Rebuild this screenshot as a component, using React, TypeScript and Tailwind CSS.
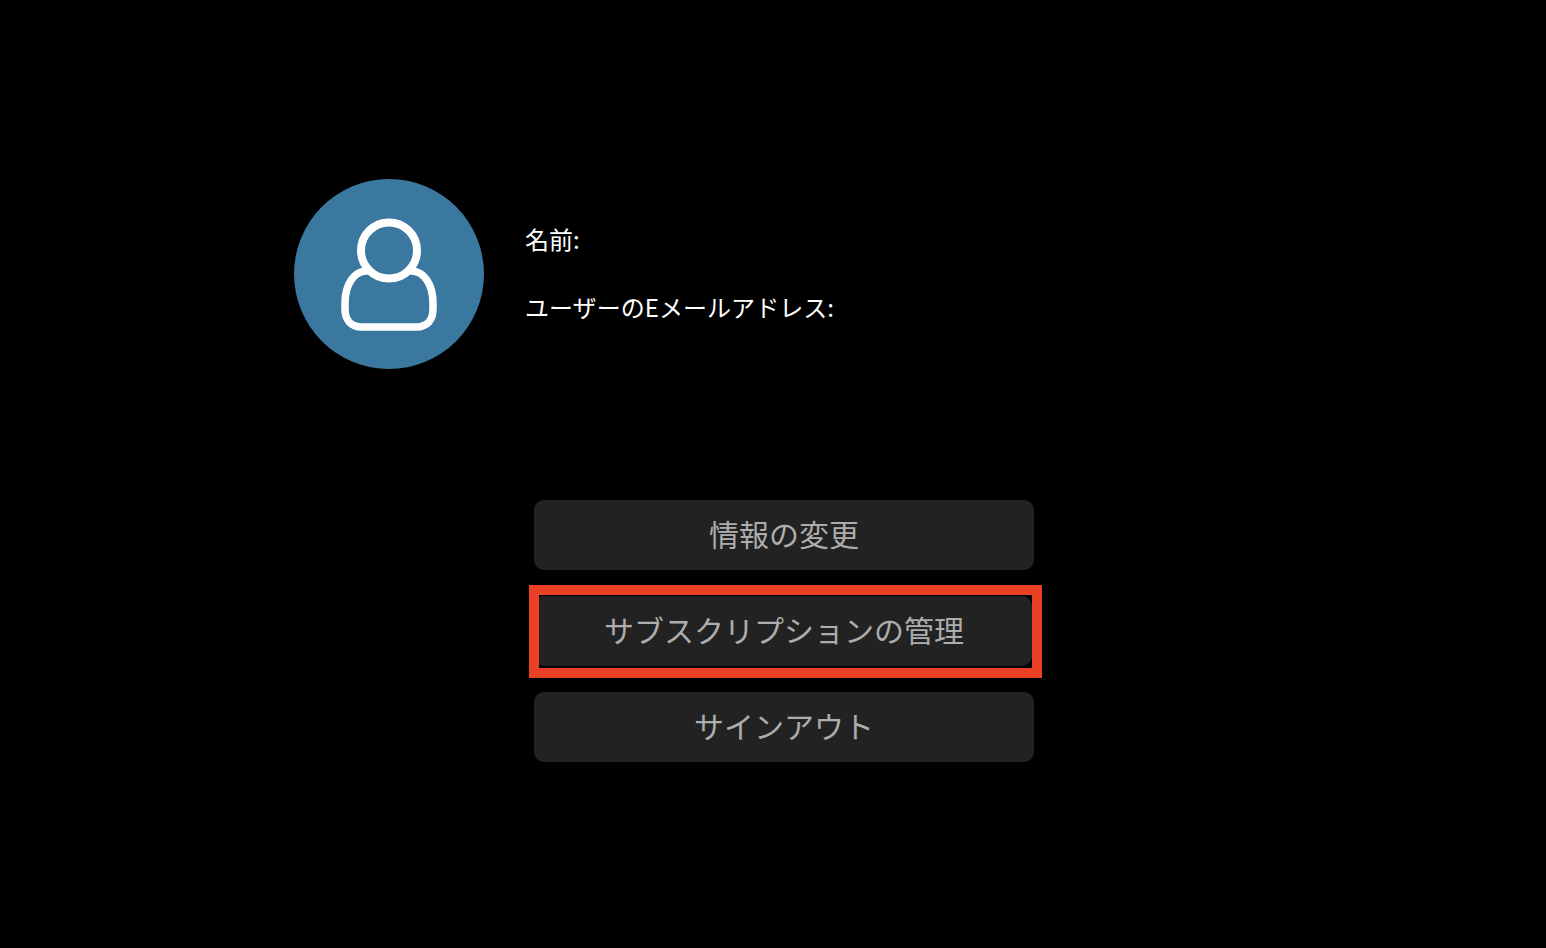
import React from "react";

const font = { fontFamily: '"Noto Sans CJK JP", "Noto Sans", sans-serif' };

const Avatar = () => (
  <div className="w-[190px] h-[190px] rounded-full bg-[#3a789f] shrink-0">
    <svg viewBox="0 0 190 190" className="w-full h-full" fill="none" stroke="#fff" strokeWidth="7.5">
      <circle cx="95" cy="71.5" r="28" strokeWidth="8" />
      <path d="M74 92C60 91 51 106 51 124V130C51 141 57 148 68 148H122C133 148 139 141 139 130V124C139 106 130 91 116 92" />
    </svg>
  </div>
);

const btn = "h-[70px] rounded-[10px] bg-[#222222] text-[#adadad] text-[30px] pb-[4px] flex items-center justify-center";

export default function App() {
  return (
    <div className="w-full h-[948px] bg-black overflow-hidden pt-[179px]" style={font}>
      <div className="flex pl-[294px]">
        <Avatar />
        <div className="ml-[41px] pt-[43px] text-white text-[24px] leading-[34px] tracking-[0.05px] flex flex-col gap-[34px]">
          <div>名前:</div>
          <div>ユーザーのEメールアドレス:</div>
        </div>
      </div>

      <div className="ml-[534px] mt-[131px] w-[500px] flex flex-col gap-[26px]">
        <button className={btn}>情報の変更</button>
        <div className="relative">
          <button className={`${btn} w-[498px] pl-[2px]`}>サブスクリプションの管理</button>
          <div className="absolute -left-[5px] -right-[8px] -top-[11px] -bottom-[12px] border-[10px] border-[#ea4025]" />
        </div>
        <button className={btn}>サインアウト</button>
      </div>
    </div>
  );
}
